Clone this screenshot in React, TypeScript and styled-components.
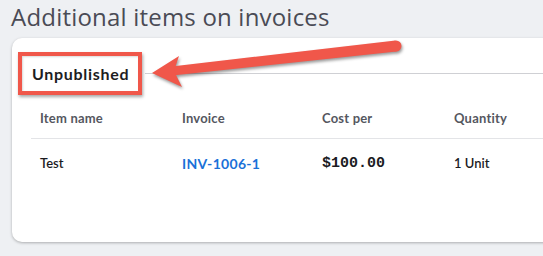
import styled, { createGlobalStyle } from 'styled-components'

const ANNOTATION_RED = '#f0574a'

const COLUMNS = [
  { key: 'name', label: 'Item name' },
  { key: 'invoice', label: 'Invoice' },
  { key: 'cost', label: 'Cost per' },
  { key: 'quantity', label: 'Quantity' },
] as const

const ROWS = [{ name: 'Test', invoice: 'INV-1006-1', cost: '$100.00', quantity: '1 Unit' }]

const GlobalStyle = createGlobalStyle`
  html, body {
    margin: 0;
    padding: 0;
    background: #eef0f3;
    overflow: hidden;
  }
  body {
    font-family: Lato, 'Noto Sans', sans-serif;
  }
`

const Page = styled.div`
  width: 543px;
  height: 256px;
  padding: 3px 0 0 11px;
  box-sizing: border-box;
  overflow: hidden;
`

const Title = styled.h2`
  margin: 0;
  font-family: 'Open Sans', Lato, sans-serif;
  font-size: 24px;
  line-height: 28px;
  font-weight: 400;
  color: #4a4b55;
  letter-spacing: 0.2px;
`

const Card = styled.section`
  position: relative;
  margin-top: 7px;
  margin-left: 1px;
  width: 640px;
  height: 204px;
  padding: 15px 0 0 19px;
  box-sizing: border-box;
  background: #fff;
  border-radius: 10px;
  box-shadow: 0 1px 3px rgba(0, 0, 0, 0.28);
`

const SectionHeader = styled.div`
  display: flex;
  align-items: center;
  height: 40px;
`

const SectionLabel = styled.span`
  position: relative;
  padding-left: 1px;
  font-size: 16px;
  font-weight: 700;
  letter-spacing: 0.7px;
  color: #1d1d22;
`

const Highlight = styled.span`
  position: absolute;
  left: -13px;
  right: -13px;
  top: -12px;
  bottom: -12px;
  border: 4px solid ${ANNOTATION_RED};
  box-shadow: 1px 2px 3px rgba(0, 0, 0, 0.35), inset 1px 1px 2px rgba(0, 0, 0, 0.15);
`

const SectionRule = styled.span`
  flex: 1;
  height: 1px;
  margin-left: 16px;
  background: #cfd0d4;
`

const Arrow = styled.svg`
  position: absolute;
  left: 0;
  top: 0;
  overflow: visible;
  filter: drop-shadow(1px 2px 1.5px rgba(0, 0, 0, 0.4));
`

const Table = styled.div`
  margin-top: 5px;
`

const Row = styled.div<{ $head?: boolean }>`
  display: grid;
  grid-template-columns: 142px 140px 132px 1fr;
  align-items: center;
  height: ${(p) => (p.$head ? '40px' : '48px')};
  border-bottom: ${(p) => (p.$head ? '1px solid #e3e4e7' : 'none')};
  padding-left: 9px;
`

const HeadCell = styled.div`
  font-size: 13px;
  font-weight: 700;
  letter-spacing: 0.2px;
  color: #55575f;
`

const Cell = styled.div<{ $kind: string }>`
  font-size: ${(p) => (p.$kind === 'cost' ? '15px' : p.$kind === 'invoice' ? '14px' : '13px')};
  font-weight: ${(p) => (p.$kind === 'name' || p.$kind === 'quantity' ? 600 : 700)};
  font-family: ${(p) => (p.$kind === 'cost' ? "'Liberation Mono', monospace" : 'inherit')};
  color: ${(p) => (p.$kind === 'invoice' ? '#1a71d8' : '#1b1b1f')};
  letter-spacing: ${(p) => (p.$kind === 'invoice' ? '0.3px' : '0')};
`

export default function App() {
  return (
    <Page>
      <GlobalStyle />
      <Title>Additional items on invoices</Title>
      <Card>
        <SectionHeader>
          <SectionLabel>
            Unpublished
            <Highlight />
          </SectionLabel>
          <SectionRule />
        </SectionHeader>
        <Table>
          <Row $head>
            {COLUMNS.map((c) => (
              <HeadCell key={c.key}>{c.label}</HeadCell>
            ))}
          </Row>
          {ROWS.map((r) => (
            <Row key={r.invoice}>
              {COLUMNS.map((c) => (
                <Cell key={c.key} $kind={c.key}>
                  {r[c.key]}
                </Cell>
              ))}
            </Row>
          ))}
        </Table>
        <Arrow width="400" height="60" viewBox="0 0 400 60">
          <polygon
            points="160.3,37.5 384.6,13.5 383.4,2.5 159.7,28.5"
            fill={ANNOTATION_RED}
          />
          <circle cx="384" cy="8" r="5.5" fill={ANNOTATION_RED} />
          <polygon points="140,35 167,18 162,33 170,49" fill={ANNOTATION_RED} />
        </Arrow>
      </Card>
    </Page>
  )
}
